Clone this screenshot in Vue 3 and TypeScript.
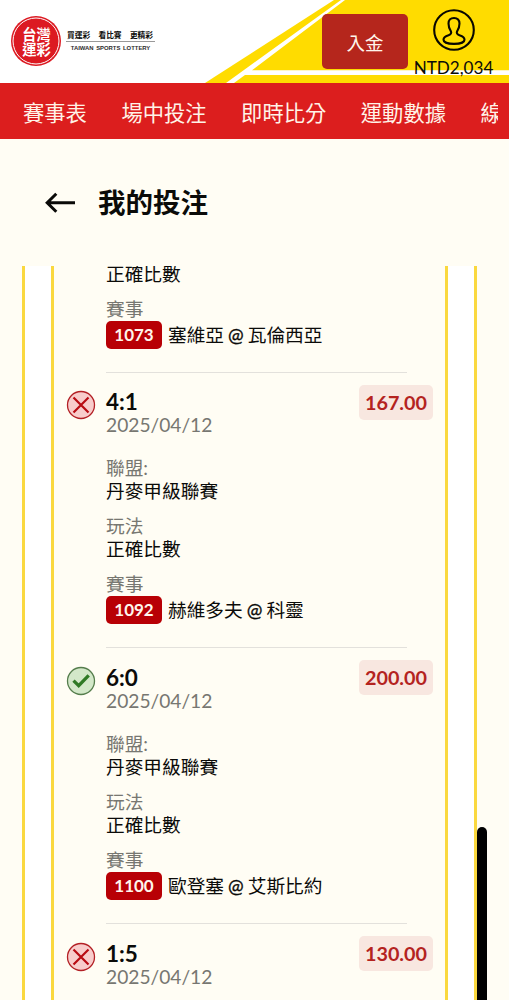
<script setup lang="ts">
interface Bet {
  score?: string
  date?: string
  won?: boolean
  odds?: string
  league?: string
  play?: string
  code?: string
  match?: string[]
}

const tabs: string[] = ['賽事表', '場中投注', '即時比分', '運動數據', '線']

const bets: Bet[] = [
  { play: '正確比數', code: '1073', match: ['塞維亞', '瓦倫西亞'] },
  { score: '4:1', date: '2025/04/12', won: false, odds: '167.00', league: '丹麥甲級聯賽', play: '正確比數', code: '1092', match: ['赫維多夫', '科靈'] },
  { score: '6:0', date: '2025/04/12', won: true, odds: '200.00', league: '丹麥甲級聯賽', play: '正確比數', code: '1100', match: ['歐登塞', '艾斯比約'] },
  { score: '1:5', date: '2025/04/12', won: false, odds: '130.00' },
]
</script>

<template>
  <div class="page">
    <header class="top">
      <svg class="top-bg" width="509" height="83" viewBox="0 0 509 83">
        <path d="M334 0H509V83H205Z" fill="#ffdc00" />
        <path d="M341 0H345L252 70.300H509V75H245L234 83H226Z" fill="#fff" />
      </svg>
      <div class="brand">
        <div class="seal">
          <svg class="seal-ring" width="50" height="50" viewBox="0 0 50 50">
            <circle cx="25" cy="25" r="25" fill="#dc1a22" />
            <circle cx="25" cy="25" r="23" fill="none" stroke="#fff" stroke-width="1" />
          </svg>
          <div class="seal-text"><span>台灣</span><span>運彩</span></div>
        </div>
        <div class="slogan">
          <div class="slogan-zh"><span>買運彩</span><span>看比賽</span><span>更精彩</span></div>
          <div class="slogan-en">TAIWAN SPORTS LOTTERY</div>
        </div>
      </div>
      <button class="deposit">入金</button>
      <div class="account">
        <svg width="42" height="42" viewBox="0 0 42 42" fill="none" stroke="#080800" stroke-width="2.100">
          <circle cx="21" cy="21" r="19.800" />
          <path d="M21 9C17.400 9 15.500 11.300 15.500 14.500C15.500 18 16.500 20.300 17.900 22.300C18.700 24 18 25.300 15.500 26.300C12 27.500 10.500 28.800 10.500 30.700C10.500 33.200 15 34.900 21 34.900S31.500 33.200 31.500 30.700C31.500 28.800 30 27.500 26.500 26.300C24 25.300 23.300 24 24.100 22.300C25.500 20.300 26.500 18 26.500 14.500C26.500 11.300 24.600 9 21 9Z" />
        </svg>
        <span class="balance">NTD2,034</span>
      </div>
    </header>

    <nav class="tabs">
      <div class="tab-track">
        <span v-for="t in tabs" :key="t">{{ t }}</span>
      </div>
    </nav>

    <div class="heading">
      <svg width="32" height="22" viewBox="0 0 32 22" fill="none" stroke="#0a0a08" stroke-width="3">
        <path d="M12.300 1.700L3.200 10.700L12.300 19.700M3.500 10.700H31" />
      </svg>
      <h1>我的投注</h1>
    </div>

    <main class="outer">
      <div class="inner">
        <article v-for="(b, i) in bets" :key="i" class="bet">
          <div v-if="b.score" class="bet-head">
            <svg class="status" width="30" height="30" viewBox="0 0 30 30" fill="none">
              <template v-if="b.won">
                <circle cx="15" cy="15" r="13.500" fill="#d3e8c9" stroke="#557d4c" stroke-width="1.300" />
                <path d="M7.500 14.600L12.700 19.700L22.700 9.300" stroke="#2f7a25" stroke-width="3.300" />
              </template>
              <template v-else>
                <circle cx="15" cy="15" r="13.500" fill="#f8cccb" stroke="#b32025" stroke-width="1.300" />
                <path d="M7.500 7.500L22.500 22.500M22.500 7.500L7.500 22.500" stroke="#b80b12" stroke-width="2.200" />
              </template>
            </svg>
            <div class="summary">
              <div class="score">{{ b.score }}</div>
              <div class="date">{{ b.date }}</div>
            </div>
            <div class="odds">{{ b.odds }}</div>
          </div>
          <div class="details">
            <div v-if="b.league" class="field">
              <div class="label">聯盟:</div>
              <div class="value">{{ b.league }}</div>
            </div>
            <div v-if="b.play" class="field">
              <div v-if="b.league" class="label">玩法</div>
              <div class="value">{{ b.play }}</div>
            </div>
            <div v-if="b.match" class="field event">
              <div class="label">賽事</div>
              <div class="match">
                <span class="code">{{ b.code }}</span>
                <span>{{ b.match[0] }}</span><span class="at">@</span><span>{{ b.match[1] }}</span>
              </div>
            </div>
          </div>
        </article>
      </div>
      <div class="thumb"></div>
    </main>
  </div>
</template>

<style>
html,
body {
  background: #fffdf4;
  overflow: hidden;
}
</style>

<style scoped>
.page {
  box-sizing: border-box;
  width: 509px;
  height: 1000px;
  overflow: hidden;
  display: flex;
  flex-direction: column;
  background: #fffdf4;
  color: #0b0b09;
  font-family: Lato, "Noto Sans CJK TC", sans-serif;
}
.page * {
  box-sizing: border-box;
}
svg {
  display: block;
  flex: none;
}
.top {
  position: relative;
  flex: none;
  height: 83px;
  background: #fff;
  display: flex;
  align-items: flex-start;
}
.top-bg {
  position: absolute;
  left: 0;
  top: 0;
}
.brand {
  position: relative;
  display: flex;
  width: 322px;
  padding: 16px 0 0 11px;
}
.seal {
  position: relative;
  width: 50px;
  height: 50px;
}
.seal-ring {
  position: absolute;
  inset: 0;
}
.seal-text {
  position: relative;
  display: flex;
  flex-direction: column;
  align-items: center;
  padding: 11px 0 0 1px;
  color: #fff;
  font-size: 14.300px;
  line-height: 15px;
  font-weight: 700;
}
.slogan {
  width: 89px;
  margin: 11px 0 0 5px;
}
.slogan-zh {
  display: flex;
  justify-content: space-between;
  height: 15px;
  padding: 0 2px 0 1px;
  border-bottom: 1px solid #999;
  font-size: 7.700px;
  line-height: 16px;
  font-weight: 700;
}
.slogan-en {
  margin-top: 1px;
  text-align: center;
  font-family: "Liberation Sans", sans-serif;
  font-size: 5.900px;
  font-weight: 700;
  color: #2c2c2c;
  line-height: 10px;
  white-space: nowrap;
  word-spacing: 1px;
}
.deposit {
  position: relative;
  width: 86px;
  height: 55px;
  margin-top: 14px;
  padding: 1px 0 0;
  border: 0;
  border-radius: 5px;
  background: #b5261c;
  color: #fff6ec;
  font: 400 18.500px Lato, "Noto Sans CJK TC", sans-serif;
}
.account {
  position: relative;
  display: flex;
  flex-direction: column;
  align-items: center;
  width: 91px;
  padding-top: 9px;
}
.balance {
  font-size: 17.100px;
  line-height: 22px;
  margin-top: 6px;
}
.tabs {
  flex: none;
  height: 56px;
  padding: 0 11px 0 23px;
  background: #dc1e1e;
  color: #fff3e8;
}
.tab-track {
  display: flex;
  gap: 34.500px;
  height: 56px;
  overflow: hidden;
  white-space: nowrap;
  font-size: 21.300px;
  line-height: 61px;
}
.tab-track span {
  flex: none;
}
.heading {
  flex: none;
  display: flex;
  align-items: center;
  height: 127px;
  padding-left: 44px;
  gap: 22px;
}
.heading h1 {
  margin: 0;
  font-size: 27.500px;
  line-height: 40px;
  font-weight: 700;
}
.outer {
  position: relative;
  flex: 1;
  min-height: 0;
  margin: 0 32px 0 22px;
  padding: 0 26px;
  border: solid #fad83f;
  border-width: 0 3px;
  background: #fff;
}
.inner {
  height: 100%;
  overflow: hidden;
  border: solid #fad83f;
  border-width: 0 3px;
  background: #fffdf4;
}
.thumb {
  position: absolute;
  right: -12.500px;
  top: 561px;
  bottom: -10px;
  width: 10px;
  border-radius: 5px;
  background: #000;
}
.bet {
  height: 275.600px;
  padding: 12.500px 12px 0 11.500px;
}
.bet:first-child {
  height: 106.400px;
  padding-top: 0;
  margin-top: -4px;
  margin-bottom: 4px;
}
.bet-head {
  display: flex;
  align-items: flex-start;
  height: 71.300px;
}
.status {
  margin-top: 5.500px;
}
.summary {
  flex: 1;
  margin: 5.500px 0 0 10.500px;
}
.score {
  font-size: 22.500px;
  line-height: 24px;
  font-weight: 700;
}
.date {
  font-size: 19.200px;
  line-height: 22.500px;
  color: #777771;
}
.odds {
  width: 74px;
  height: 35px;
  border-radius: 5px;
  background: #f8e7e0;
  color: #b4231f;
  font-size: 19.800px;
  line-height: 35px;
  font-weight: 700;
  text-align: center;
}
.details {
  margin: 0 26px 0 40.500px;
}
.field {
  height: 58px;
  font-size: 18.700px;
}
.label,
.value {
  height: 23.300px;
  line-height: 24.500px;
}
.label {
  color: #777771;
}
.bet:first-child .field:first-child {
  height: 34.700px;
}
.event {
  height: 76.300px;
  border-bottom: 1px solid #e3e1dc;
}
.match {
  display: flex;
  align-items: center;
  height: 28px;
  margin-top: 1px;
  line-height: 26px;
  white-space: nowrap;
}
.code {
  width: 56px;
  height: 28px;
  margin-right: 6px;
  border-radius: 5px;
  background: #b80005;
  color: #fff5ec;
  font-size: 17px;
  font-weight: 700;
  line-height: 28px;
  text-align: center;
}
.match > .at {
  margin: 0 4px;
  -webkit-text-stroke: 0.300px #0b0b09;
}
</style>
